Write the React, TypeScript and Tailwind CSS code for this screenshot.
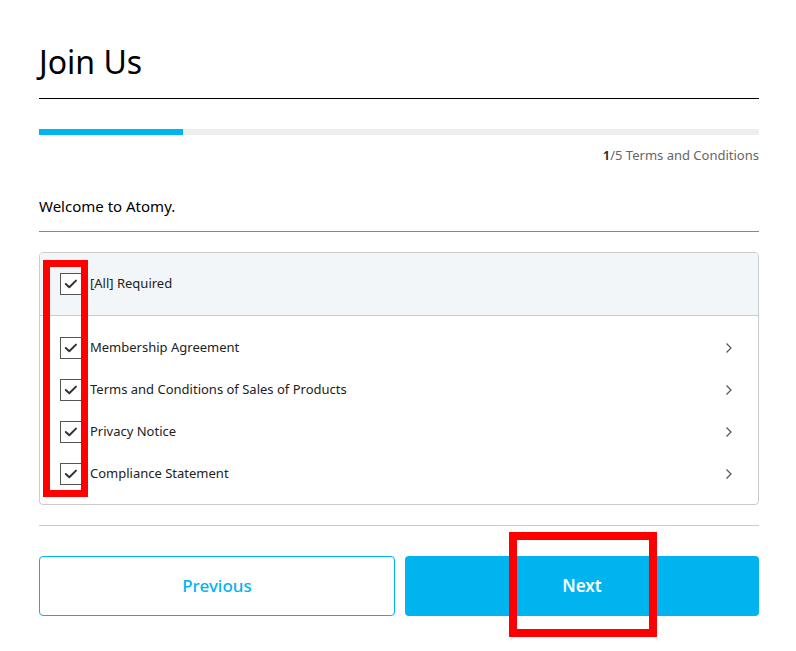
import React from "react";

const Check = () => (
  <span className="flex h-[22px] w-[22px] shrink-0 items-center justify-center border border-[#555] bg-white">
    <svg width="16" height="16" viewBox="0 0 16 16" fill="none">
      <path d="M2.8 8 L6.3 11.2 L13 4.6" stroke="#333" strokeWidth="2" strokeLinecap="round" strokeLinejoin="round" />
    </svg>
  </span>
);

const Chevron = () => (
  <svg width="10" height="12" viewBox="0 0 10 12" fill="none">
    <path d="M2.5 1.5 L7 6 L2.5 10.5" stroke="#555" strokeWidth="1.2" />
  </svg>
);

const items = [
  "Membership Agreement",
  "Terms and Conditions of Sales of Products",
  "Privacy Notice",
  "Compliance Statement",
];

export default function App() {
  return (
    <div className="relative w-[796px] h-[651px] overflow-hidden bg-white" style={{ fontFamily: '"Noto Sans", "Open Sans", sans-serif' }}>
      <div className="ml-[39px] w-[720px] pt-[40px]">
        <h1 className="text-[32px] leading-[44px] text-black">Join Us</h1>
        <div className="mt-[14px] h-px bg-black" />
        <div className="mt-[30px] flex h-[6px] bg-[#eeeeee]">
          <div className="h-full w-[20%] bg-[#00b4ef]" />
        </div>
        <div className="mt-[10px] text-right text-[13px] leading-[20px] text-[#666]">
          <span className="font-semibold text-[#222]">1</span>/5 Terms and Conditions
        </div>
        <div className="mt-[30px] text-[15px] leading-[22px] text-black">Welcome to Atomy.</div>
        <div className="mt-[14px] h-px bg-[#888]" />
        <div className="mt-[20px] overflow-hidden rounded-[4px] border border-[#cccccc]">
          <div className="flex h-[63px] items-center gap-[8px] border-b border-[#cccccc] bg-[#f3f6f9] pl-[20px] text-[13px] text-[#222]">
            <Check />
            <span>[All] Required</span>
          </div>
          <div className="pt-[11px] pb-[9px]">
            {items.map((t) => (
              <div key={t} className="flex h-[42px] items-center gap-[8px] pl-[20px] pr-[24px] text-[13px] text-[#222]">
                <Check />
                <span className="flex-1">{t}</span>
                <Chevron />
              </div>
            ))}
          </div>
        </div>
        <div className="mt-[20px] h-px bg-[#cccccc]" />
        <div className="mt-[30px] flex gap-[10px]">
          <button className="h-[60px] flex-1 rounded-[4px] border border-[#00b4ef] bg-white text-[17px] font-medium text-[#00b4ef]">
            Previous
          </button>
          <button className="h-[60px] flex-1 rounded-[4px] bg-[#00b4ef] text-[17px] font-semibold text-white">
            Next
          </button>
        </div>
      </div>
      <div className="pointer-events-none absolute left-[43px] top-[260px] h-[237px] w-[45px] border-[7px] border-[#ff0000]" />
      <div className="pointer-events-none absolute left-[509px] top-[532px] h-[105px] w-[148px] border-[8px] border-[#ff0000]" />
    </div>
  );
}
